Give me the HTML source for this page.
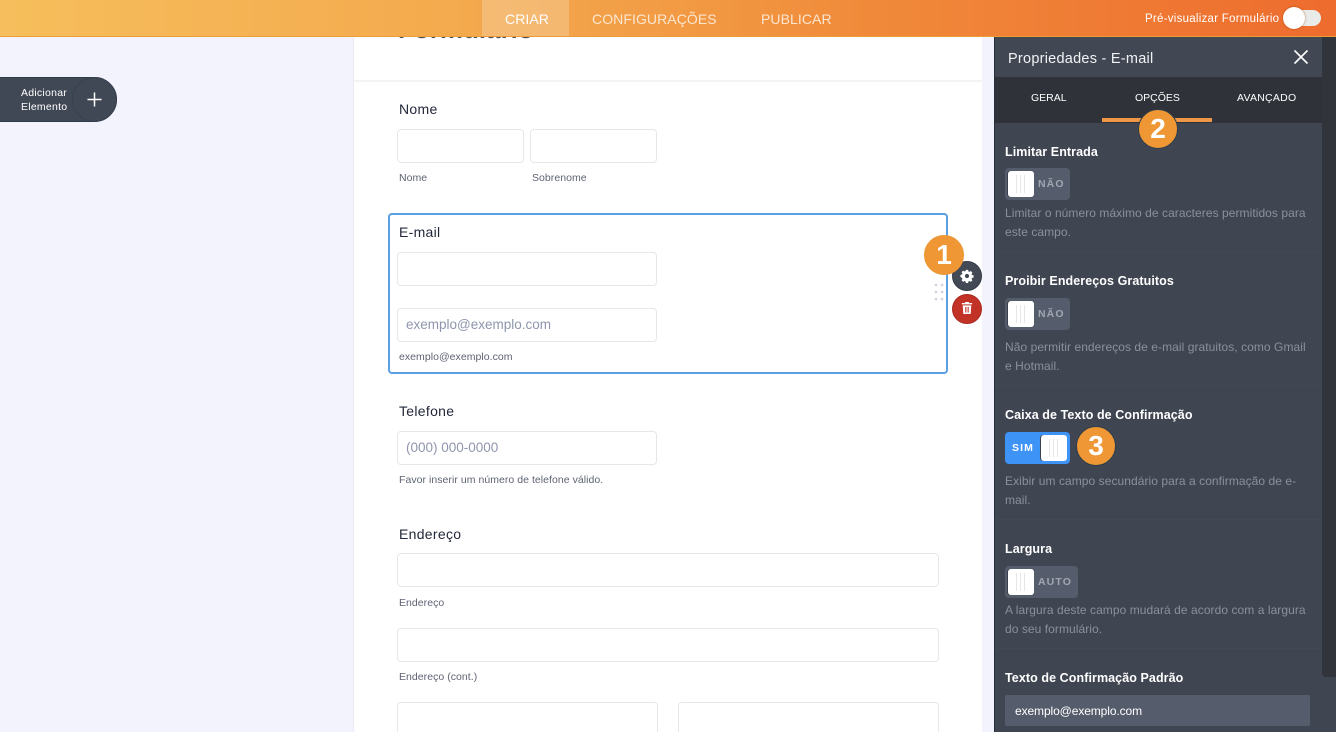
<!DOCTYPE html>
<html><head><meta charset="utf-8"><style>
html,body{margin:0;padding:0;width:1336px;height:732px;overflow:hidden;background:#f3f3fe;font-family:"Liberation Sans",sans-serif}
body{position:relative}
*{box-sizing:border-box}
.a,.t,.i,.b{position:absolute}
.t{white-space:nowrap;line-height:16px}
.i{background:#fff;border:1px solid #e5e7ed;border-radius:4px}
.l{font-size:14px;color:#23283a;letter-spacing:.3px}
.s{font-size:10.5px;color:#5f6474;letter-spacing:.04px}
.ph{font-size:13.5px;color:#8f96ad}
.h{font-size:12.5px;font-weight:bold;color:#fff;letter-spacing:.08px}
.d{font-size:12px;color:#8b909c;letter-spacing:.06px}
.tab{font-size:14px;color:#fde6d0;letter-spacing:.08px}
.tg{background:#555c6b;border-radius:4px;height:32px}
.k{background:#fff;border-radius:3px;width:26px;height:26px;box-shadow:-1px 0 0 0 #3a404c;background-image:linear-gradient(90deg,transparent 8px,#e6e6e6 8px,#e6e6e6 9px,transparent 9px,transparent 12px,#e6e6e6 12px,#e6e6e6 13px,transparent 13px,transparent 16px,#e6e6e6 16px,#e6e6e6 17px,transparent 17px);background-size:26px 18px;background-position:0 4px;background-repeat:no-repeat}
.tl{font-size:10.5px;font-weight:bold;letter-spacing:1.1px;color:#a1a6b1}
.n{width:40px;height:40px;border-radius:50%;background:#ee9734;border:1px solid #2f3e4a;color:#fff;font-size:28px;font-weight:bold;text-align:center;line-height:38px}
.sep{left:995px;width:327px;height:1px;background:#434955}
</style></head><body>

<!-- form -->
<div class="a" style="left:353px;top:37px;width:629px;height:695px;background:#fff;border-left:1px solid #ebebf5"></div>
<div class="a" style="left:354px;top:80px;width:628px;height:2px;background:#f3f3f6"></div>
<div class="t" style="left:398px;top:16px;font-size:26px;line-height:26px;font-weight:bold;color:#50525c">Formulário</div>

<div class="t l" style="left:399px;top:101px">Nome</div>
<div class="i" style="left:397px;top:129px;width:127px;height:34px"></div>
<div class="i" style="left:530px;top:129px;width:127px;height:34px"></div>
<div class="t s" style="left:399px;top:170px">Nome</div>
<div class="t s" style="left:532px;top:170px">Sobrenome</div>

<div class="a" style="left:388px;top:213px;width:560px;height:161px;border:2px solid #5a9fe4;border-radius:4px"></div>
<div class="t l" style="left:399px;top:224px">E-mail</div>
<div class="i" style="left:397px;top:252px;width:260px;height:34px"></div>
<div class="i" style="left:397px;top:308px;width:260px;height:34px"></div>
<div class="t ph" style="left:406px;top:317px">exemplo@exemplo.com</div>
<div class="t s" style="left:399px;top:349px">exemplo@exemplo.com</div>

<div class="t l" style="left:399px;top:403px">Telefone</div>
<div class="i" style="left:397px;top:431px;width:260px;height:34px"></div>
<div class="t ph" style="left:406px;top:440px">(000) 000-0000</div>
<div class="t s" style="left:399px;top:472px">Favor inserir um número de telefone válido.</div>

<div class="t l" style="left:399px;top:526px">Endereço</div>
<div class="i" style="left:397px;top:553px;width:542px;height:34px"></div>
<div class="t s" style="left:399px;top:595px">Endereço</div>
<div class="i" style="left:397px;top:628px;width:542px;height:34px"></div>
<div class="t s" style="left:399px;top:669px">Endereço (cont.)</div>
<div class="i" style="left:397px;top:702px;width:261px;height:34px"></div>
<div class="i" style="left:678px;top:702px;width:261px;height:34px"></div>

<!-- field controls -->
<svg class="a" style="left:930px;top:282px" width="18" height="22"><g fill="#cfd2e0"><circle cx="6" cy="3" r="1.3"/><circle cx="12" cy="3" r="1.3"/><circle cx="6" cy="10" r="1.3"/><circle cx="12" cy="10" r="1.3"/><circle cx="6" cy="17" r="1.3"/><circle cx="12" cy="17" r="1.3"/></g></svg>
<div class="a" style="left:952px;top:261px;width:30px;height:30px;border-radius:50%;background:#434a55;border:1px solid #333a45"></div>
<svg class="a" style="left:960px;top:269px" width="14" height="14" viewBox="0 0 16 16"><path fill="#fff" fill-rule="evenodd" d="M6.7 1h2.6l.4 1.8 1.1.5 1.6-1 1.8 1.8-1 1.6.5 1.1 1.8.4v2.6l-1.8.4-.5 1.1 1 1.6-1.8 1.8-1.6-1-1.1.5-.4 1.8H6.7l-.4-1.8-1.1-.5-1.6 1-1.8-1.8 1-1.6-.5-1.1L.5 9.3V6.7l1.8-.4.5-1.1-1-1.6 1.8-1.8 1.6 1 1.1-.5zM8 5.6a2.4 2.4 0 1 0 0 4.8 2.4 2.4 0 0 0 0-4.8z"/></svg>
<div class="a" style="left:952px;top:294px;width:30px;height:30px;border-radius:50%;background:#c33227;border:1px solid #a82a20"></div>
<svg class="a" style="left:961px;top:301px" width="12" height="14" viewBox="0 0 14 16"><path fill="#fff" fill-rule="evenodd" d="M5 1h4l.6 1.2H13v1.600H1V2.200h3.400zM2 5h10l-.7 10H2.700zM5 6.800v6.400h1.300V6.800zM7.700 6.800v6.400H9V6.800z"/></svg>
<div class="a n" style="left:924px;top:235px;border-color:#ee9734">1</div>

<!-- add element -->
<div class="a" style="left:-30px;top:77px;width:147px;height:45px;border-radius:23px;background:#414855;border:1px solid #2e3b4a"></div>
<div class="a" style="left:72px;top:77px;width:45px;height:45px;border-radius:50%;border:1px solid #394050"></div>
<div class="t" style="left:21px;top:86px;font-size:10.500px;line-height:14px;color:#fff;letter-spacing:.25px">Adicionar<br>Elemento</div>
<svg class="a" style="left:86px;top:91px" width="17" height="17"><path d="M8.500 1.500v14M1.500 8.500h14" stroke="#fff" stroke-width="1.500"/></svg>

<!-- top bar -->
<div class="a" style="left:0;top:0;width:1336px;height:37px;background:linear-gradient(90deg,#f6be5c 0,#f3a64b 40%,#f08a3a 65%,#ee6c2e 100%);border-bottom:1px solid #ee9c36"></div>
<div class="a" style="left:482px;top:0;width:87px;height:36px;background:rgba(255,255,255,.22)"></div>
<div class="t tab" style="left:505px;top:11px;color:#fff">CRIAR</div>
<div class="t tab" style="left:592px;top:11px">CONFIGURAÇÕES</div>
<div class="t tab" style="left:761px;top:11px">PUBLICAR</div>
<div class="t" style="left:1145px;top:11px;font-size:11.500px;color:#fff;letter-spacing:.26px">Pré-visualizar Formulário</div>
<div class="a" style="left:1290px;top:10px;width:31px;height:16px;border-radius:8px;background:#e9ebe9"></div>
<div class="a" style="left:1283px;top:7px;width:22px;height:22px;border-radius:50%;background:#fff;box-shadow:0 0 2px rgba(150,60,0,.7)"></div>

<!-- panel -->
<div class="a" style="left:994px;top:37px;width:342px;height:695px;background:#3f4551;border-left:1px solid #262f3e"></div>
<div class="a" style="left:1322px;top:37px;width:14px;height:640px;background:#31343b;border-bottom-left-radius:4px"></div>
<div class="a" style="left:995px;top:37px;width:327px;height:40px;background:#414753"></div>
<div class="t" style="left:1008px;top:51px;font-size:14.500px;color:#f1f2f4;letter-spacing:.25px">Propriedades - E-mail</div>
<svg class="a" style="left:1293px;top:49px" width="16" height="16"><path d="M1.500 1.500l13 13M14.500 1.500l-13 13" stroke="#fff" stroke-width="1.600"/></svg>
<div class="a" style="left:995px;top:77px;width:327px;height:46px;background:#2f3239"></div>
<div class="t" style="left:1031px;top:90px;font-size:10.500px;color:#fff">GERAL</div>
<div class="t" style="left:1135px;top:90px;font-size:10.500px;color:#fff">OPÇÕES</div>
<div class="t" style="left:1237px;top:90px;font-size:10.500px;color:#fff;letter-spacing:.25px">AVANÇADO</div>
<div class="a" style="left:1102px;top:118px;width:110px;height:4px;background:#ee9749"></div>
<div class="a n" style="left:1138px;top:109px">2</div>

<div class="t h" style="left:1005px;top:144px">Limitar Entrada</div>
<div class="a tg" style="left:1005px;top:168px;width:65px"></div>
<div class="a k" style="left:1008px;top:171px"></div>
<div class="t tl" style="left:1038px;top:176px">NÃO</div>
<div class="t d" style="left:1005px;top:205px">Limitar o número máximo de caracteres permitidos para</div>
<div class="t d" style="left:1005px;top:224px">este campo.</div>
<div class="a sep" style="top:251px"></div>

<div class="t h" style="left:1005px;top:273px">Proibir Endereços Gratuitos</div>
<div class="a tg" style="left:1005px;top:298px;width:65px"></div>
<div class="a k" style="left:1008px;top:301px"></div>
<div class="t tl" style="left:1038px;top:306px">NÃO</div>
<div class="t d" style="left:1005px;top:339px">Não permitir endereços de e-mail gratuitos, como Gmail</div>
<div class="t d" style="left:1005px;top:358px">e Hotmail.</div>
<div class="a sep" style="top:385px"></div>

<div class="t h" style="left:1005px;top:407px">Caixa de Texto de Confirmação</div>
<div class="a tg" style="left:1005px;top:432px;width:65px;background:#3d94f6"></div>
<div class="a k" style="left:1041px;top:435px"></div>
<div class="t tl" style="left:1012px;top:440px;color:#fff">SIM</div>
<div class="a n" style="left:1076px;top:426px">3</div>
<div class="t d" style="left:1005px;top:473px">Exibir um campo secundário para a confirmação de e-</div>
<div class="t d" style="left:1005px;top:492px">mail.</div>
<div class="a sep" style="top:519px"></div>

<div class="t h" style="left:1005px;top:541px">Largura</div>
<div class="a tg" style="left:1005px;top:566px;width:73px"></div>
<div class="a k" style="left:1008px;top:569px"></div>
<div class="t tl" style="left:1038px;top:574px">AUTO</div>
<div class="t d" style="left:1005px;top:602px">A largura deste campo mudará de acordo com a largura</div>
<div class="t d" style="left:1005px;top:621px">do seu formulário.</div>
<div class="a sep" style="top:648px"></div>

<div class="t h" style="left:1005px;top:670px">Texto de Confirmação Padrão</div>
<div class="a" style="left:1005px;top:695px;width:305px;height:31px;background:#555c6b;border-radius:2px"></div>
<div class="t" style="left:1015px;top:703px;font-size:12px;color:#fff;letter-spacing:-.1px">exemplo@exemplo.com</div>
</body></html>
